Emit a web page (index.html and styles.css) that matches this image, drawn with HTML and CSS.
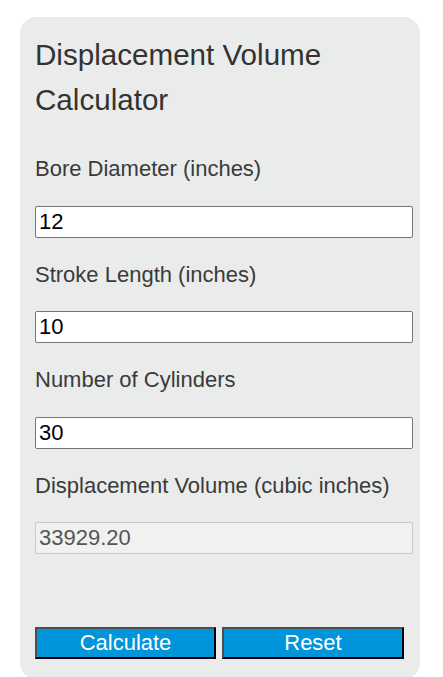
FILE: index.html
```html
<!DOCTYPE html>
<html>
<head>
<meta charset="utf-8">
<link rel="stylesheet" href="styles.css">
</head>
<body>
<div class="card">
  <h1 class="title">Displacement Volume Calculator</h1>
  <label class="label">Bore Diameter (inches)</label>
  <input class="field" type="text" value="12">
  <label class="label">Stroke Length (inches)</label>
  <input class="field" type="text" value="10">
  <label class="label">Number of Cylinders</label>
  <input class="field" type="text" value="30">
  <label class="label">Displacement Volume (cubic inches)</label>
  <input class="field output" type="text" value="33929.20" readonly>
  <div class="buttons">
    <button class="btn btn-calc">Calculate</button>
    <button class="btn btn-reset">Reset</button>
  </div>
</div>
</body>
</html>
```

FILE: styles.css
```css
html, body {
  margin: 0;
  padding: 0;
  background: #ffffff;
}
body {
  padding: 17px 20px 0 20px;
  font-family: "Liberation Sans", Arial, sans-serif;
  color: #333;
}
.card {
  width: 400px;
  box-sizing: border-box;
  background: #eaeceb;
  border-radius: 16px;
  padding: 15px 15px 20px 15px;
}
.title {
  margin: 0 0 34px 0;
  font-weight: normal;
  font-size: 29.6px;
  line-height: 45px;
  color: #333;
}
.label {
  display: block;
  font-size: 22px;
  line-height: 25px;
  margin: 24px 0 24.5px 0;
  color: #3a3a3a;
}
.field {
  display: block;
  width: 378px;
  height: 32px;
  box-sizing: border-box;
  margin: 0;
  padding: 2px 3px;
  font-family: "Liberation Sans", Arial, sans-serif;
  font-size: 22px;
  color: #000;
  background: #fff;
  border: 1px solid #767676;
  border-radius: 2px;
  outline: none;
}
.output {
  background: #f1f1f1;
  border-color: #c8c8c8;
  color: #555;
}
.buttons {
  display: flex;
  gap: 6px;
  margin-top: 73px;
}
.btn {
  height: 32px;
  box-sizing: border-box;
  padding: 0;
  font-family: "Liberation Sans", Arial, sans-serif;
  font-size: 22px;
  line-height: 26px;
  color: #fff;
  background: #0095da;
  border-style: solid;
  border-width: 2px;
  border-color: #4d4d4d #000 #000 #4d4d4d;
  border-radius: 0;
}
.btn-calc {
  width: 181px;
}
.btn-reset {
  width: 182px;
}
```
